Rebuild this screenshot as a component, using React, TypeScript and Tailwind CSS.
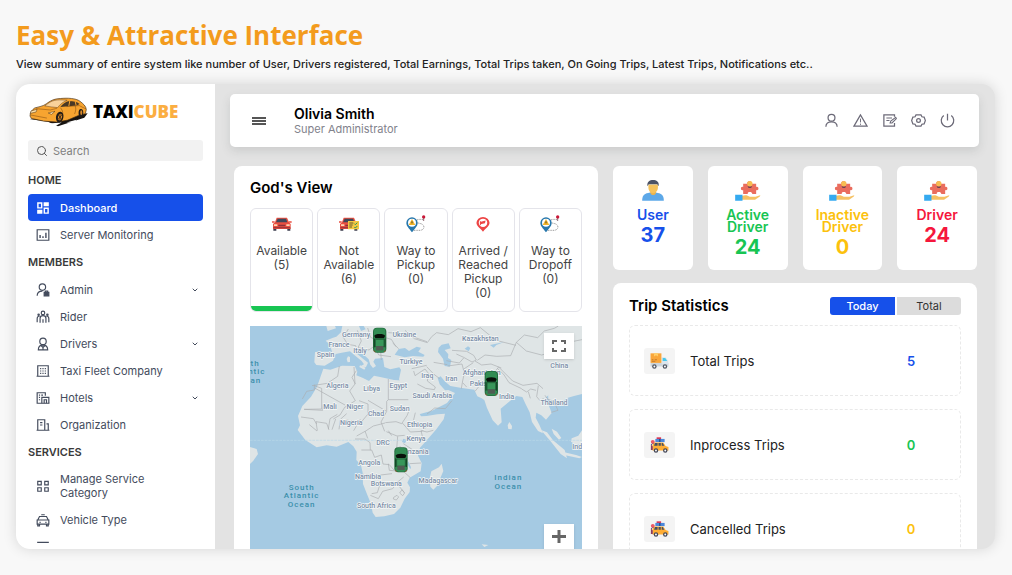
import React from 'react';
import { Search, ChevronDown } from 'lucide-react';

const icons: Record<string, React.ReactNode> = {
  dashboard: <path d="M2 2h9v11H2zM13 2h9v7h-9zM13 11h9v11h-9zM2 15h9v7H2zM4.500 4.500v6h4v-6zM15.500 13.500v6h4v-6z" fill="currentColor" fillRule="evenodd" stroke="none" />,
  chart: <><path d="M2 3h20v18H2z" /><path d="M7 12v5M12 14v3M17 8v9" strokeWidth="2.400" /></>,
  admin: <><circle cx="11" cy="7" r="5.500" /><path d="M2 22c0-5 3-8 9-8" /><path d="M14 16h8v6h-8z" fill="currentColor" /><path d="M16 16v-2h4v2" /></>,
  rider: <><circle cx="12" cy="5" r="3" /><path d="M7 22v-8c0-6 10-6 10 0v8M12 16v6M2 21v-6c0-3 2-5 4-4M22 21v-6c0-3-2-5-4-4" /><circle cx="4.500" cy="8" r="1.200" /><circle cx="19.500" cy="8" r="1.200" /></>,
  driver: <><circle cx="12" cy="7.500" r="5.500" /><path d="M4 22c0-5 3-8 8-8s8 3 8 8zM9 15l3 3 3-3M12 18v3" /></>,
  company: <><path d="M1 21h22M3 21V3h18v18" /><path d="M8 7v2M12 7v2M16 7v2M8 11v2M12 11v2M16 11v2M8 15v2M12 15v2M16 15v2" /></>,
  hotel: <><path d="M9 21H2V3h14v5M1 21h22" /><path d="M5 7h2M9 7h3M5 11h2M5 15h2M10 21V11h12v10M14 21v-6h4v6" /></>,
  organization: <><path d="M1 21h22M3 21V3h12v18M18 10h3v11" /><path d="M7 8h4M7 12h4" /></>,
  grid: <path d="M3 4h6v6H3zM15 4h6v6h-6zM3 15h6v6H3zM15 15h6v6h-6z" />,
  taxi: <><path d="M9 3h6M2 12h20v7H2zM3 12l3-6h12l3 6M3 19v3h3v-3M18 19v3h3v-3M6 16h2M16 16h2" /></>,
  line: <path d="M2 4h20" />,
  user: <><circle cx="12" cy="7.500" r="5.500" /><path d="M3 22c0-5 4-8 9-8s9 3 9 8" /></>,
  alert: <><path d="M12 3 1.500 21h21z" /><path d="M12 9v6M12 17v2" strokeWidth="1.500" /></>,
  note: <><path d="M20 6V3H3v18h17v-5" /><path d="M7 8h9M7 12h5M13 16l1-3 8-6 1 2-7 7z" strokeWidth="1.700" /></>,
  settings: <><path d="M8 3h8l1.500 3 3.500.5L23 12l-2 5.500-3.500.5L16 21H8l-1.500-3-3.500-.5L1 12l2-5.500 3.500-.5z" /><circle cx="12" cy="12" r="3" /></>,
  power: <path d="M12 1v11M6 4a10 10 0 1 0 12 0" />,
};

const Icon = ({ name, className }: { name: string; className: string }) => (
  <svg viewBox="0 0 24 24" className={className} fill="none" stroke="currentColor" strokeWidth="2" aria-hidden="true">
    {icons[name]}
  </svg>
);

const LogoCar = () => (
  <svg viewBox="36 52 178 88" className="h-[30px] w-[60px]" aria-hidden="true">
    <path d="M40 117l55 8 30 13 78-25 10-13-40 4z" fill="#171310" />
    <path d="M98 130l38-3-20 11zM150 127l30-8-8 9z" fill="#fff" />
    <path d="M42 108c0-12 6-18 14-24 14-4 24-5 34-12 12-9 22-15 42-16 22-2 46-1 58 8 10 8 18 14 19 25l-3 12-22 6-30 13-32 6-40-3-36-8z" fill="#f7a430" stroke="#4b2f12" strokeWidth="2" />
    <path d="M86 78c12-10 22-18 44-18l22 1c-12 5-22 13-28 22-12-2-26-2-38-5z" fill="#f9d29a" stroke="#6b431a" strokeWidth="1.500" />
    <path d="M132 81c6-8 15-16 27-18 12 0 22 2 30 9l-8 5z" fill="#493825" />
    <path d="M160 63l-3 16M176 65l3 12" stroke="#f7a430" strokeWidth="3" />
    <path d="M45 93l18-5-3 8-17 4zM96 99l20-5-10 9z" fill="#ffe3ae" stroke="#4b2f12" strokeWidth="1.500" />
    <path d="M44 105l48 9M60 86l42 4 20-5M132 83c8 10 8 16 6 30M150 80l38-3 20 10M176 78c3 8 2 15-2 24" fill="none" stroke="#794610" strokeWidth="1.500" />
    <ellipse cx="130" cy="111" rx="11" ry="16" fill="#211b17" transform="rotate(12 130 111)" />
    <ellipse cx="131" cy="111" rx="6" ry="10" fill="#d8892c" transform="rotate(12 131 111)" />
    <path d="M124 102l13 18M138 103l-14 16M131 100v22" stroke="#33210f" strokeWidth="2" />
    <ellipse cx="193" cy="99" rx="7" ry="12" fill="#211b17" />
    <ellipse cx="194" cy="98" rx="3" ry="7" fill="#d8892c" />
  </svg>
);

type Item = { icon: string; label: string; active?: boolean; arrow?: boolean };

const menu: { title: string; items: Item[] }[] = [
  {
    title: 'HOME',
    items: [
      { icon: 'dashboard', label: 'Dashboard', active: true },
      { icon: 'chart', label: 'Server Monitoring' },
    ],
  },
  {
    title: 'MEMBERS',
    items: [
      { icon: 'admin', label: 'Admin', arrow: true },
      { icon: 'rider', label: 'Rider' },
      { icon: 'driver', label: 'Drivers', arrow: true },
      { icon: 'company', label: 'Taxi Fleet Company' },
      { icon: 'hotel', label: 'Hotels', arrow: true },
      { icon: 'organization', label: 'Organization' },
    ],
  },
  {
    title: 'SERVICES',
    items: [
      { icon: 'grid', label: 'Manage Service Category' },
      { icon: 'taxi', label: 'Vehicle Type' },
      { icon: 'line', label: '' },
    ],
  },
];

const Sidebar = () => (
  <aside className="w-[199px] shrink-0 overflow-hidden bg-white px-3">
    <div className="flex items-center gap-[5px] pt-[13px]">
      <LogoCar />
      <span className="text-[17px] leading-[30px] font-extrabold text-black font-['Open_Sans',sans-serif]">
        TAXI<span className="text-[#fbae42]">CUBE</span>
      </span>
    </div>
    <label className="mt-[13px] flex h-[21px] items-center gap-[5px] rounded-[3px] bg-[#f2f2f2] px-2 text-[#555]">
      <Search className="h-3 w-3 shrink-0" />
      <input type="text" aria-label="Search" placeholder="Search" className="w-full bg-transparent text-[11px] leading-4 outline-none placeholder:text-[#808080]" />
    </label>
    <nav className="mt-[6px] flex flex-col gap-px">
      {menu.map((group) => (
        <div key={group.title}>
          <h2 className="text-[11px] leading-[27px] font-semibold text-[#3a3a3a]">{group.title}</h2>
          {group.items.map((item) => (
            <a
              key={item.icon}
              href="#"
              className={
                item.active
                  ? 'flex min-h-[27px] items-center rounded-[4px] bg-[#1650ea] px-2 py-[6px] font-medium text-white'
                  : 'flex min-h-[27px] items-center px-2 py-[6px] text-[#434b5c]'
              }
            >
              <Icon name={item.icon} className="mr-[10px] -my-1 h-[14px] w-[14px] shrink-0" />
              <span className="max-w-28 grow text-[11px] leading-[14px]">{item.label}</span>
              {item.arrow && <ChevronDown className="-mr-1 ml-auto h-2 w-2 shrink-0" strokeWidth={3} />}
            </a>
          ))}
        </div>
      ))}
    </nav>
  </aside>
);

const TopBar = () => (
  <header className="mt-[10px] mr-4 ml-[15px] flex h-[53px] items-center rounded-[5px] bg-white pr-6 pl-[22px] shadow-[0_4px_10px_rgba(80,90,90,0.16)]">
    <button type="button" aria-label="Toggle menu" className="flex w-[14px] flex-col gap-px">
      <span className="h-[2px] w-full bg-[#555]" />
      <span className="h-[2px] w-full bg-[#555]" />
      <span className="h-[2px] w-full bg-[#555]" />
    </button>
    <div className="ml-7 grow">
      <h2 className="text-[14px] leading-4 font-semibold text-black">Olivia Smith</h2>
      <p className="text-[11px] leading-[14px] text-[#82828c]">Super Administrator</p>
    </div>
    <div className="flex gap-[14px] text-[#6c6a78]">
      {['user', 'alert', 'note', 'settings', 'power'].map((name) => (
        <button key={name} type="button" aria-label={name}>
          <Icon name={name} className="h-[15px] w-[15px]" />
        </button>
      ))}
    </div>
  </header>
);

const RedCar = ({ ticket }: { ticket?: boolean }) => (
  <svg viewBox="0 0 60 42" className="h-[14px] w-5" aria-hidden="true">
    <path d="M4 33h9v8H4zM46 33h9v8h-9z" fill="#3b3c4d" />
    <path d="M14 2h31l6 14 5 5v15H3V21l6-5z" fill="#e94f40" />
    <path d="M17 5h25l4 11H12z" fill="#3f4759" />
    <path d="M0 13h8v4H0zM51 13h8v4h-8z" fill="#e94f40" />
    <path d="M6 22h10v5H6zM43 22h10v5H43z" fill="#ffd6b3" />
    <path d="M19 23h21v5H19zM4 31h51v3H4z" fill="#8c3239" />
    {ticket && (
      <>
        <path d="M27 12h33v25H27z" fill="#f5c842" />
        <path d="M31 18h12M31 24h10M31 30h8" stroke="#615239" strokeWidth="3" />
        <path d="M46 20l3 3 6-6M46 30l3 3 6-6" stroke="#299660" strokeWidth="3" fill="none" />
      </>
    )}
  </svg>
);

const RoutePin = () => (
  <svg viewBox="0 0 60 54" className="h-[18px] w-5" aria-hidden="true">
    <path d="M51 14C26 10 26 22 40 25c18 2 18 20 2 21H18" fill="none" stroke="#686868" strokeWidth="2" strokeDasharray="3 2" />
    <path d="M18 52C9 40 1 33 1 24a17 17 0 0 1 34 0c0 9-8 16-17 28z" fill="#2878ad" />
    <circle cx="18" cy="23" r="12" fill="#fff" />
    <path d="M18 12l10 18H8z" fill="#f3b629" />
    <path d="M18 19v6" stroke="#4c4330" strokeWidth="3" />
    <circle cx="53" cy="6" r="5" fill="#c91837" />
    <path d="M53 10v8" stroke="#5b2332" strokeWidth="2" />
  </svg>
);

const ArrivedPin = () => (
  <svg viewBox="0 0 42 46" className="h-[15px] w-[14px]" aria-hidden="true">
    <path d="M21 45C9 32 1 27 1 18a20 18 0 0 1 40 0c0 9-8 14-20 27z" fill="#ed4545" />
    <circle cx="21" cy="18" r="13" fill="#fff" />
    <path d="M12 15l17-4-2 8-14 3z" fill="#ed4545" />
    <path d="M13 13v12" stroke="#ed4545" strokeWidth="3" />
  </svg>
);

const statuses = [
  { label: 'Available', count: 5, icon: <RedCar />, active: true },
  { label: 'Not Available', count: 6, icon: <RedCar ticket /> },
  { label: 'Way to Pickup', count: 0, icon: <RoutePin /> },
  { label: 'Arrived / Reached Pickup', count: 0, icon: <ArrivedPin /> },
  { label: 'Way to Dropoff', count: 0, icon: <RoutePin /> },
];

const countries: [string, number, number][] = [
  ['Germany', 333, 50], ['Ukraine', 478, 49], ['Kazakhstan', 706, 61], ['France', 282, 79],
  ['Italy', 345, 99], ['Spain', 242, 111], ['Türkiye', 498, 132], ['China', 943, 142],
  ['Afghanistan', 710, 164], ['Iraq', 547, 172], ['Iran', 619, 181], ['Pakistan', 715, 198],
  ['Algeria', 277, 204], ['Libya', 380, 211], ['Egypt', 460, 202], ['Saudi Arabia', 562, 232],
  ['India', 785, 236], ['Thailand', 927, 253], ['Mali', 255, 266], ['Niger', 330, 266],
  ['Sudan', 464, 271], ['Chad', 393, 288], ['Nigeria', 319, 313], ['Ethiopia', 524, 319],
  ['Kenya', 513, 363], ['DRC', 414, 374], ['Tanzania', 508, 401], ['Angola', 373, 435],
  ['Namibia', 369, 475], ['Botswana', 424, 498], ['Madagascar', 579, 487], ['South Africa', 394, 563],
  ['Indonesia', 1028, 387],
];

const oceans: [string, number, number][] = [
  ['South', 170, 508], ['Atlantic', 170, 534], ['Ocean', 170, 560],
  ['Indian', 790, 479], ['Ocean', 790, 505],
  ['North', 6, 136], ['Atlantic', 8, 162], ['Ocean', 7, 187],
];

const cars: [number, number][] = [[404, 60], [739, 190], [468, 419]];

const WorldMap = () => (
  <svg viewBox="15 17 996 669" preserveAspectRatio="xMinYMin slice" className="block h-full w-full bg-[#a5cae3]" role="img" aria-label="Map of drivers">
    <g fill="#dfe5e6">
      <path d="M292 17l-4 19-14 13-10 3-22 9 13 12 6 22-22-1-29 1-2 31 6 8 25 2 25-15 8-20 18-4 25-4 13 11 22 18 7 10-13 7 19 1 6-13-15-12-22-18 2-6 20 10 17 16 5 16 8 10 9-6-8-13 5-9 24-2 4 27 18 7 27-6 5 7-6 29 22 49 20 40 13 17 44-12 45-23 24-30-20-9-10 1-16-18-6-19 9-5 12 15 17 14 30 5 42 6 9 20 13 6 8 5 8 24 17 37 16 16 11-10-3-41 27-22 20-16 18 3 10 22 12 24 7 29 18 27 15 7-11-26-11-21 2-15 15 8 14 13 17-20-8-21-14-21 15-14 23-4 21-7V17z" />
      <path d="M900 17h111v204l-24 6-23 7-14 15-40-12z" />
      <path d="M235 145l21 3 35-12 38 1 8 17-3 11 20 8 18 9 15-16 22 5 38 8 33 2 3 17-5 5 12 25 12 20 19 28 7 12 17-1 32-5 23-2-4 17-22 30-30 34-19 21-6 24 11 22-3 25-33 19-7 15 8 14-1 14-15 20-13 27-19 19-29 7-26 2-9-13-5-26-13-32-11-28-1-34-5-22-14-16 1-25-10-16-15-13-35 14-30-4-30 6-34-22-23-30 7-14-6-28 13-30 26-28 18-30z" />
      <path d="M590 430l5 22-19 45-11 11-9-9-2-25 5-21 23-12zM793 305l8 12-1 10-10-1-2-11zM15 380l20 6 4 15-14 20-10 10zM888 329l18 7 18 24 35 29 7 25-19-13-29-37zM955 395l38 9 18 6-8 4-42-9zM980 354l20-8 11-16v42l-19 1-14-9zM920 325l16 9 13 19-7 5-16-17zM345 135l17 7-4 6-15-8zM309 108l6 2v15l-7 1-3-10zM244 17h26l3 7-25 8zM710 672l20 2-12 6z" />
    </g>
    <g fill="#a5cae3">
      <path d="M449 103l12-17 19-3 12 9 23-13 13 3-8 12 19 10-4 5-31-2-25 4zM590 73l21-4 6 15-18 5 11 13-1 11 10 6-4 20-16-2-5-22-15-20 2-13zM342 17h14l6 10-14 5zM659 85l10-7 7 5-5 10zM735 74l43-9-24 9-8 8zM475 355l10 4-5 10-9-4zM455 398l5 16-3 14-4-15zM490 423l8 18-2 6-9-15z" />
    </g>
    <g fill="none" stroke="#aaaeb0" strokeWidth="2" strokeLinejoin="round">
      <path d="M310 26l-15 25 13 21 24 4 5 18M337 30l12 32-10 20 33 7 16-12M368 23l9 28 25 12 12-13 25 7 14 22M388 76l13 28 37 5M407 94l2 25M430 37l38 2 43 13 35 12M443 68l18 17M480 30l28 25 39 12 13-18 15-12 35 6 29-18 39 9 28-12 47 38 60 15M621 90l44 3 21 12 8 14-13 6-25-14-22-10M697 120l23-16 35 4 42-2 17-40M656 113l-13 15-39-7M690 122l20 12 28-3 31 12" />
      <path d="M814 66l24-22 40 8 20-20 30-8 12-7M814 66l30 26 46 12 50-14 30-24 41-8" />
      <path d="M500 145l28-6 17-4M506 152l4 14 30-20 11 14-4 22 24 18-3 8-26-4-25-13M545 139l22 23 17 13M566 126l41 7M608 137l43-6 7 27-6 28 13 14M652 187l-3 18M655 147l30-20M690 213l17-21 26-17 28-35 42 42 31 13 42-6 18 16M757 144l19 18 16 25 38 18M830 206l15 9 12-9 16 4M850 214l6 20M880 196l-5 33 10 12 10-6 10 18M900 225l8 12 18 6 13 27-20 6M546 281l23-18 32 2 20-24" />
      <path d="M283 137l-5 31-31 21-46 7M208 193v16l-23 4-13 23M209 203l91 51M208 196l22 8v62l-53 1M327 140l3 51-16 21 17 29-32 20-14 23-20 12M342 241l27 10v30l-20 24-47-6M430 176v62h60M430 238l-5 5v30l-17 32 11 28M369 240l54 32M331 191l-10-20 13-20M421 307l32-3 17 6 16-24 8-20M472 308l24 27 35-2 28-28M511 277l-6 25M178 267l55 3 2-19M168 290l37 5 10 16M193 313l23 19M217 331l-4-27 32 5 7 20M250 326l5-31 22-13M261 328l11-32M282 327l4-30 19-17M326 331l20-34M335 347l27-15 23-15 35-9M330 356h30l15 11 1 23M360 332l8 22M349 389h31l9 22 20-7 5 27 19 2 14 16M424 334l32 13 23-2M458 348l-3 38 3 40M475 370l43 28M430 331l10 15M352 462l46 3 43-5M407 464l-2 28-8 25-17 3M404 492l48-2 24-20M376 525l24 10 13-22 30-8 12-16M430 430l3 20 43 4 20 18M456 490l22 27M471 508l8 10-6 8-9-8zM446 531l10-6 5 5-7 9-9-3zM534 356l-6-25 18 4 19-5M528 428l-34 2M478 394l-14-17" />
    </g>
    <path d="M15 360h996" stroke="#b9d9e9" strokeWidth="2" strokeDasharray="8 3" />
    <g fontFamily="Roboto, sans-serif" fontSize="21" fontWeight="500" textAnchor="middle" fill="#7b8ea7" stroke="#f4f7f7" strokeWidth="4" paintOrder="stroke">
      {countries.map(([name, x, y]) => <text key={name} x={x} y={y}>{name}</text>)}
    </g>
    <g fontFamily="Roboto, sans-serif" fontSize="24" fontWeight="500" letterSpacing="3" textAnchor="middle" fill="#3b8fab">
      {oceans.map(([name, x, y]) => <text key={`${name}-${x}`} x={x} y={y}>{name}</text>)}
    </g>
    {cars.map(([x, y]) => (
      <g key={x} transform={`translate(${x} ${y})`}>
        <rect x="-20" y="-38" width="40" height="75" rx="12" fill="#246b3e" />
        <rect x="-17" y="-36" width="34" height="71" rx="10" fill="#328c53" />
        <path d="M-16-13c0-8 32-8 32 0l-3 7h-26z" fill="#071009" />
        <path d="M-13-3h26v22h-26z" fill="#38965a" stroke="#164d2b" strokeWidth="2" />
        <path d="M-11 17h22v13h-22z" fill="#505b53" />
        <path d="M-16-5v26M16-5v26" stroke="#103d20" strokeWidth="3" />
        <path d="M-18 31l5 4M18 31l-5 4" stroke="#ce512c" strokeWidth="2" />
      </g>
    ))}
  </svg>
);

const GodsView = () => (
  <section className="flex min-h-0 min-w-0 flex-col rounded-t-lg bg-white px-4 pt-3">
    <h2 className="text-[15px] leading-5 font-semibold text-black">God's View</h2>
    <div className="mt-[10px] grid grid-cols-5 gap-1">
      {statuses.map((s) => (
        <button
          key={s.label}
          type="button"
          className="relative flex h-[104px] flex-col items-center overflow-hidden rounded-md border border-[#e4e4ea] pt-[6px] text-[12px] leading-[14px] text-[#444]"
        >
          <span className="flex h-[18px] items-center">{s.icon}</span>
          <span className="mt-[11px]">{s.label}</span>
          <span>({s.count})</span>
          {s.active && <span className="absolute inset-x-0 bottom-0 h-[5px] bg-[#18c553]" />}
        </button>
      ))}
    </div>
    <div className="relative mt-[14px] min-h-0 flex-1 overflow-hidden">
      <WorldMap />
      <button type="button" aria-label="Full screen" className="absolute top-[7px] right-2 flex h-[26px] w-[30px] items-center justify-center bg-white shadow-sm">
        <svg viewBox="0 0 14 12" className="h-3 w-[14px]" fill="none" stroke="#666" strokeWidth="2">
          <path d="M1 4V1h4M9 1h4v3M13 8v3H9M5 11H1V8" />
        </svg>
      </button>
      <button type="button" aria-label="Zoom in" className="absolute right-2 bottom-0 flex h-[25px] w-[30px] items-center justify-center bg-white shadow-sm">
        <svg viewBox="0 0 14 14" className="h-[14px] w-[14px]" stroke="#666" strokeWidth="3">
          <path d="M0 6.500h14M7 0v13" />
        </svg>
      </button>
    </div>
  </section>
);

const UserArt = () => (
  <svg viewBox="0 0 66 64" className="h-[21px] w-[22px]" aria-hidden="true">
    <path d="M0 63c0-18 8-22 24-25h18c16 3 24 7 24 25z" fill="#5da8e8" />
    <path d="M25 31h17v9c-4 8-13 8-17 0z" fill="#e9b34d" />
    <path d="M19 14h29v9c0 11-8 17-15 17s-14-6-14-17z" fill="#f5c25b" />
    <path d="M16 19C14 5 23 0 33 0s20 5 17 19l-4-6H20z" fill="#4c5366" />
  </svg>
);

const DriverArt = () => (
  <svg viewBox="0 0 77 60" className="h-5 w-[26px]" aria-hidden="true">
    <path d="M24 8h13c-5-10 17-10 13 0h13v10c9-4 9 13 0 9v12H51c2-8-16-8-13 0H24V27c-9 4-9-13 0-9z" fill="#ea6d5e" />
    <circle cx="44" cy="8" r="8" fill="#f7bd52" />
    <path d="M37 14c4 4 10 4 14 0l-3 7h-8z" fill="#6b4751" />
    <path d="M20 45c10-5 17-2 24 2h17l14-4c2 4-8 8-15 13H20z" fill="#f5c163" />
    <path d="M0 41h22v18H0z" fill="#35aaf0" />
  </svg>
);

const totals = [
  { label: 'User', value: 37, color: 'text-[#1650ea]', art: <UserArt /> },
  { label: 'Active Driver', value: 24, color: 'text-[#18c553]', art: <DriverArt /> },
  { label: 'Inactive Driver', value: 0, color: 'text-[#fcc10d]', art: <DriverArt /> },
  { label: 'Driver', value: 24, color: 'text-[#f5173c]', art: <DriverArt /> },
];

const Truck = () => (
  <svg viewBox="0 0 58 50" className="h-4 w-[19px]" aria-hidden="true">
    <path d="M1 31h56v11H1z" fill="#ccd5dc" />
    <path d="M36 13h12l8 11v11H36z" fill="#dbe5ed" />
    <path d="M39 16h8l6 9H39z" fill="#46c9ec" />
    <path d="M1 1h34v30H1z" fill="#f9a63b" />
    <path d="M12 1h12v10l-6-4-6 4z" fill="#ffd06a" />
    <path d="M5 21h5M14 21h7M5 26h11" stroke="#a76528" strokeWidth="2" />
    <circle cx="13" cy="42" r="7" fill="#515763" /><circle cx="46" cy="42" r="7" fill="#515763" />
    <circle cx="13" cy="42" r="3" fill="#fff" /><circle cx="46" cy="42" r="3" fill="#fff" />
  </svg>
);

const TripCar = () => (
  <svg viewBox="0 0 58 50" className="h-4 w-[19px]" aria-hidden="true">
    <path d="M20 1h14v6H20z" fill="#db3452" /><path d="M16 6h29v10H16z" fill="#4c87db" />
    <path d="M28 6h4v10h-4z" fill="#274982" />
    <path d="M9 17h32l7 11 9 3v11H7V26z" fill="#ffad34" />
    <path d="M15 19h8v8H12zM26 19h7v8h-7zM36 19h3l5 8h-8z" fill="#455063" />
    <path d="M2 23l6 7v11H2z" fill="#8c3c5c" />
    <path d="M3 25l8-10M5 15l5 7" stroke="#3a5a91" strokeWidth="3" />
    <circle cx="8" cy="15" r="6" fill="#eb5966" />
    <circle cx="18" cy="42" r="7" fill="#454858" /><circle cx="47" cy="42" r="7" fill="#454858" />
    <circle cx="18" cy="42" r="3" fill="#fff" /><circle cx="47" cy="42" r="3" fill="#fff" />
  </svg>
);

const trips = [
  { label: 'Total Trips', value: 5, color: 'text-[#1650ea]', art: <Truck /> },
  { label: 'Inprocess Trips', value: 0, color: 'text-[#18c553]', art: <TripCar /> },
  { label: 'Cancelled Trips', value: 0, color: 'text-[#fcc10d]', art: <TripCar /> },
];

const Overview = () => (
  <div className="flex min-w-0 flex-col gap-[13px]">
    <div className="grid grid-cols-4 gap-[15px]">
      {totals.map((t) => (
        <div key={t.label} className={`flex h-[104px] flex-col items-center rounded-md bg-white px-2 pt-[14px] ${t.color}`}>
          <div className="flex h-[21px] items-end">{t.art}</div>
          <h3 className="mt-2 flex flex-col items-center text-[14px] leading-3 font-semibold">
            {t.label.split(' ').map((word) => <span key={word}>{word}</span>)}
          </h3>
          <p className="mt-[2px] text-[20px] leading-6 font-bold">{t.value}</p>
        </div>
      ))}
    </div>
    <section className="flex-1 rounded-t-lg bg-white px-4 pt-[13px]">
      <div className="flex items-center justify-between">
        <h2 className="text-[15px] leading-5 font-semibold text-black">Trip Statistics</h2>
        <div className="flex gap-[2px] text-[11px] leading-[18px]">
          <button type="button" className="w-[65px] rounded-l-[3px] bg-[#1650ea] font-medium text-white">Today</button>
          <button type="button" className="w-16 rounded-r-[3px] bg-[#dcdcdc] text-[#333]">Total</button>
        </div>
      </div>
      <div className="mt-[9px] flex flex-col gap-[13px]">
        {trips.map((t) => (
          <div key={t.label} className="flex h-[71px] shrink-0 items-center rounded-md border border-dashed border-[#e9e9e9] px-[14px]">
            <div className="flex h-[26px] w-[31px] items-center justify-center rounded-[3px] bg-[#f4f4f4]">{t.art}</div>
            <span className="ml-[15px] grow text-[13px] leading-4 text-[#222]">{t.label}</span>
            <span className={`w-[70px] text-center text-[13px] leading-4 font-semibold ${t.color}`}>{t.value}</span>
          </div>
        ))}
      </div>
    </section>
  </div>
);

const App = () => {
  return (
    <div className="flex h-screen flex-col overflow-hidden bg-[#f8f8f8] pr-[17px] pb-[26px] pl-4 font-[Inter,sans-serif]">
      <div className="pt-[18px]">
        <h1 className="text-[26px] leading-[34px] font-bold text-[#f39b1d] font-['Open_Sans',sans-serif]">Easy &amp; Attractive Interface</h1>
        <p className="mt-1 text-[11px] leading-4 font-medium text-[#222]">
          View summary of entire system like number of User, Drivers registered, Total Earnings, Total Trips taken, On Going Trips, Latest Trips, Notifications etc..
        </p>
      </div>
      <main className="mt-3 flex min-h-0 flex-1 overflow-hidden rounded-[14px] bg-[#e3e3e3] shadow-[0_0_14px_rgba(0,0,0,0.14)]">
        <Sidebar />
        <div className="flex min-w-0 flex-1 flex-col">
          <TopBar />
          <div className="mt-[19px] grid min-h-0 flex-1 grid-cols-2 grid-rows-[minmax(0,1fr)] gap-[15px] overflow-hidden pr-[18px] pl-[19px]">
            <GodsView />
            <Overview />
          </div>
        </div>
      </main>
    </div>
  );
};

export default App;
